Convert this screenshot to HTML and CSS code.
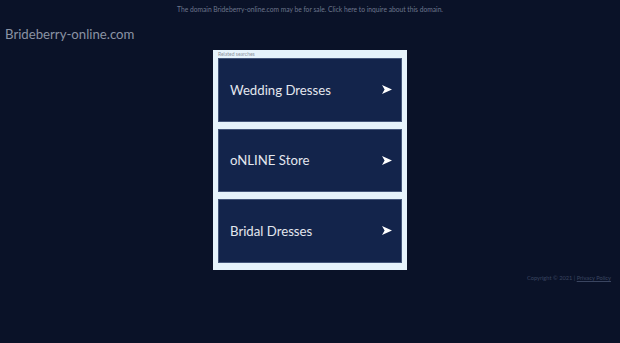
FILE: index.html
```html
<!DOCTYPE html>
<html lang="en">
<head>
<meta charset="utf-8">
<title>Brideberry-online.com</title>
<link rel="stylesheet" href="styles.css">
</head>
<body>
<div class="topbar">The domain Brideberry-online.com may be for sale. Click here to inquire about this domain.</div>
<div class="title">Brideberry-online.com</div>
<div class="box">
  <div class="label">Related searches</div>
  <div class="cards">
    <a class="card" href="#"><span>Wedding Dresses</span><svg class="arrow" viewBox="0 0 10 9" width="10" height="9"><polygon points="0,0 10,4.5 0,9 2.6,4.5" fill="#ffffff"/></svg></a>
    <a class="card" href="#"><span>oNLINE Store</span><svg class="arrow" viewBox="0 0 10 9" width="10" height="9"><polygon points="0,0 10,4.5 0,9 2.6,4.5" fill="#ffffff"/></svg></a>
    <a class="card" href="#"><span>Bridal Dresses</span><svg class="arrow" viewBox="0 0 10 9" width="10" height="9"><polygon points="0,0 10,4.5 0,9 2.6,4.5" fill="#ffffff"/></svg></a>
  </div>
</div>
<div class="footer">Copyright © 2021 | <a class="policy" href="#">Privacy Policy</a></div>
</body>
</html>
```
FILE: styles.css
```css
html, body {
  margin: 0;
  padding: 0;
}
body {
  background: #0a1228;
  font-family: Lato, "Open Sans", sans-serif;
  width: 620px;
  height: 343px;
  overflow: hidden;
}
.topbar {
  height: 18px;
  line-height: 18px;
  text-align: center;
  font-size: 6.7px;
  color: #6c768c;
}
.title {
  padding: 6px 5px 0;
  line-height: 20px;
  font-size: 13.2px;
  color: #8a92a4;
}
.box {
  width: 184px;
  margin: 6px auto 0;
  padding: 0 5px 7px;
  background: #e6f3fb;
}
.label {
  height: 8px;
  line-height: 8px;
  font-size: 5px;
  color: #8c929c;
}
.cards {
  display: flex;
  flex-direction: column;
  gap: 7px;
}
.card {
  box-sizing: border-box;
  height: 63.5px;
  display: flex;
  align-items: center;
  justify-content: space-between;
  padding: 0 9px 0 11px;
  background: #13244b;
  border: 1px solid #44567a;
  color: #e3e7ef;
  font-size: 13.2px;
  text-decoration: none;
}
.arrow {
  display: block;
}
.footer {
  margin-top: 4px;
  padding-right: 9px;
  text-align: right;
  font-size: 5.7px;
  line-height: 8px;
  color: #3a4560;
}
.policy {
  color: #3a4560;
  text-decoration: underline;
}
```
